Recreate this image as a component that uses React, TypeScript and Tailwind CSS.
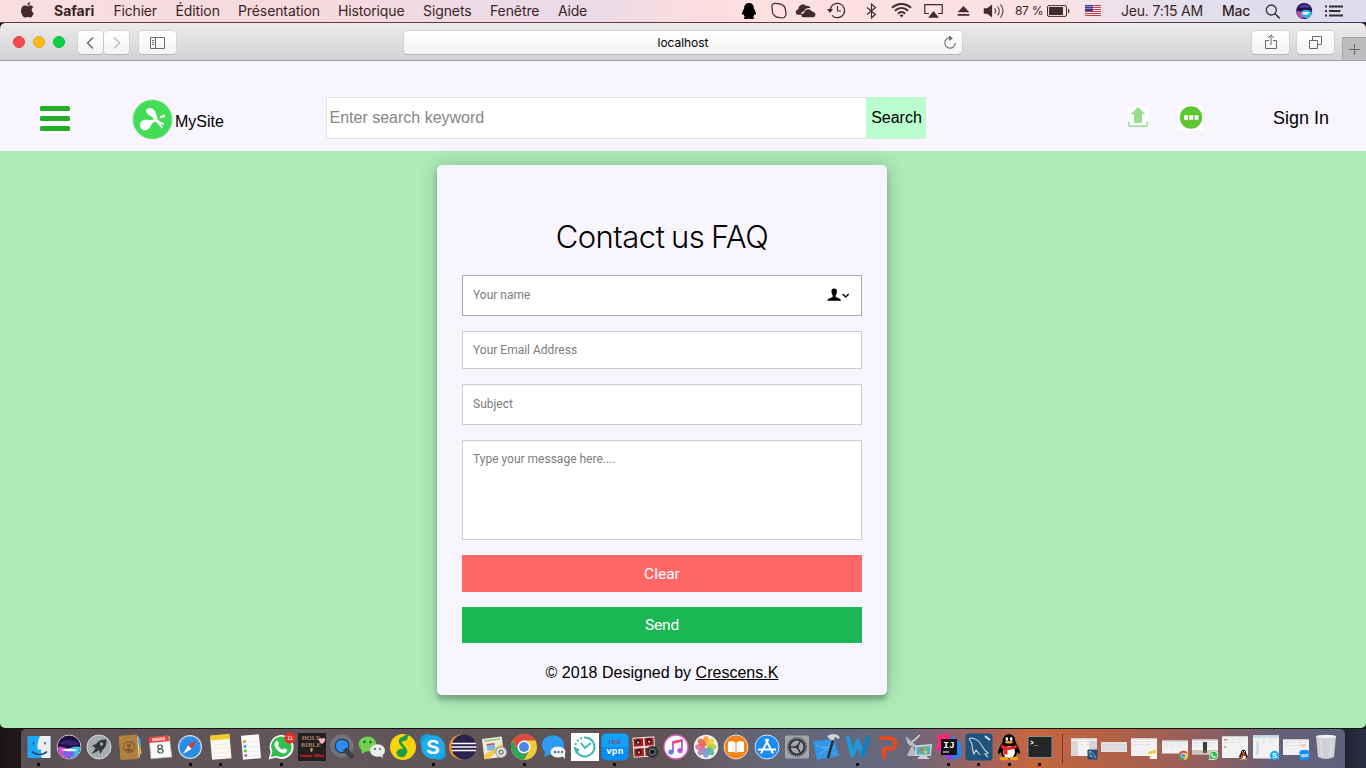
import React from "react";

type Kids = { children: React.ReactNode };

/* ---------- menu bar ---------- */

function MenuIcon({ w, slot, children }: Kids & { w: number; slot: string }) {
  return (
    <div className={`h-[22px] shrink-0 ${slot}`}>
      <svg width={w} height={22} viewBox={`0 0 ${w} 22`} fill="#432a2d" className="block overflow-visible">
        {children}
      </svg>
    </div>
  );
}

const label = "shrink-0 whitespace-nowrap";

function MenuBar() {
  return (
    <div className="flex h-[22px] shrink-0 items-center bg-[linear-gradient(90deg,#f7dfdf_0px,#f5d9de_330px,#eddbe6_490px,#ebdbe6_600px,#fbdde1_690px,#ffe0e0_760px,#fde2e3_1040px,#efe1e9_1110px,#e2dfed_1200px,#dcdcec_1366px)] pl-5 font-['Inter','Liberation_Sans',sans-serif] text-[14px] leading-[22px] tracking-[-0.2px] text-[#3a2427]">
      <MenuIcon w={15} slot="w-[34px]">
        <path d="M10.2 2.2c.1 1.700-1.300 3.200-2.900 3.200-.2-1.600 1.300-3.100 2.900-3.200zM7.400 6.300c.8 0 1.700-.8 3.200-.8 1.200 0 2.200.6 2.800 1.500-2.500 1.500-2.100 4.900.4 5.900-.7 1.900-2 4.600-3.500 4.600-1 0-1.400-.6-2.700-.6s-1.700.6-2.600.6C3.300 17.500 1 14.300 1 10.700c0-3.300 1.900-5.100 3.900-5.100 1.100 0 1.900.7 2.500.7z" />
      </MenuIcon>
      <span className={`${label} w-[59.500px] font-bold tracking-[0px]`}>Safari</span>
      <span className={`${label} w-[62px]`}>Fichier</span>
      <span className={`${label} w-[62.500px] tracking-[-0.100px]`}>Édition</span>
      <span className={`${label} w-[100px] tracking-[-0.100px]`}>Présentation</span>
      <span className={`${label} w-[85px] tracking-[-0.150px]`}>Historique</span>
      <span className={`${label} w-[67px] tracking-[-0.100px]`}>Signets</span>
      <span className={`${label} w-[68px] tracking-[-0.100px]`}>Fenêtre</span>
      <span className={`${label} w-[184px]`}>Aide</span>
      <MenuIcon w={14} slot="w-[29px]">
        <path fill="#000" d="M7 3c3.200 0 4.800 2.200 4.800 5.200 1.300 2.300 2.500 4.800 2.100 6.300-.5.700-1.100 0-1.600-.4 0 1.100-.5 1.900-1.200 2.600 1.300.4 1.400 1.900 0 2.200-1.300.2-2.800.1-4.100-.5-1.300.6-2.800.7-4.100.5-1.400-.3-1.300-1.800 0-2.200-.7-.7-1.200-1.500-1.200-2.600-.5.400-1.100 1.100-1.600.4-.4-1.500.8-4 2.100-6.300C2.200 5.200 3.800 3 7 3z" />
      </MenuIcon>
      <MenuIcon w={17} slot="w-[24px]">
        <path fill="none" stroke="#432a2d" strokeWidth="1.200" d="M.8 7C.3 4.300 3 2.900 5.700 3.700c5-.8 9.100 2.500 8.900 7.300 1.300 3.500-.2 7-3.300 7-1 0-1.600-.4-2.500-.4C4.200 17.600 1 14.500 1.300 10 1.300 9 .9 8 .8 7z" />
      </MenuIcon>
      <MenuIcon w={21} slot="w-[32px]">
        <path d="M3 14.700c-3-.3-3.200-4.700.4-5.500C3.400 5.500 8.300 2.800 11 6c1.800-.6 3.800.1 4.300 2.200-3.400-.8-5.700.8-6.200 3.300-2.400.1-3.300 1.700-2.700 3.200zM8 17.200c-2.300-.1-2.400-4 1.300-4.100.2-4 5.700-5.200 7.500-1.600 4.500.2 4.800 5.400 1.200 5.700z" />
      </MenuIcon>
      <MenuIcon w={19} slot="w-[39px]">
        <path fill="none" stroke="#432a2d" strokeWidth="1.200" d="M3.200 10A7.200 7.200 0 1 1 5 15.300M10.500 6v5h3.500" />
        <path d="M0 9h6.200L3 13z" />
      </MenuIcon>
      <MenuIcon w={12} slot="w-[25px]">
        <path fill="none" stroke="#432a2d" strokeWidth="1.200" d="m1 7.500 8.500 7L5.500 18V4l4 3.500-8.500 7" />
      </MenuIcon>
      <MenuIcon w={21} slot="w-[33px]">
        <g fill="none" stroke="#432a2d" strokeWidth="2">
          <path d="M1 7.800c5.500-5.100 13.500-5.100 19 0M3.900 10.800c4-3.700 9.200-3.700 13.200 0M6.900 13.700c2.200-2 5-2 7.200 0" />
        </g>
        <path d="m10.500 17.500-2-2.300c1.300-1 2.700-1 4 0z" />
      </MenuIcon>
      <MenuIcon w={19} slot="w-[33px]">
        <path fill="none" stroke="#432a2d" strokeWidth="1.200" d="M5 13.500H.8V4.600h17.400v8.900H14" />
        <path d="m9.500 11 5.500 6.800H4z" />
      </MenuIcon>
      <MenuIcon w={13} slot="w-[26px]">
        <path d="m6.500 6 5.800 6.200H.7zM.7 14h11.600v1.800H.7z" />
      </MenuIcon>
      <MenuIcon w={22} slot="w-[32px]">
        <path d="M.8 8.200h3.400L9.100 4.500v13l-4.900-3.700H.8z" />
        <path fill="none" stroke="#432a2d" strokeWidth="1.200" d="M11.700 8.400c1.200 1.700 1.200 3.500 0 5.200M14.500 6.500c2.300 2.900 2.300 6.100 0 9M17.500 4.400c3.200 4.200 3.200 9 0 13.200" opacity=".8" />
      </MenuIcon>
      <span className={`${label} w-[31px] text-[12px] tracking-[-0.300px]`}>87 %</span>
      <MenuIcon w={24} slot="w-[38.500px]">
        <rect x="1.500" y="5.600" width="19" height="10.800" rx="1.500" fill="none" stroke="#432a2d" />
        <rect x="3" y="7" width="14" height="8" />
        <path d="M22 9h1.200v4H22z" />
      </MenuIcon>
      <MenuIcon w={16} slot="w-[36.500px]">
        <path fill="#f9e9ea" d="M0 5h16v11H0z" />
        <path stroke="#c53b49" d="M0 5.500h16M0 7.500h16M0 9.500h16M0 11.500h16M0 13.500h16M0 15.500h16" />
        <path fill="#3b3b85" d="M0 5h8v6H0z" />
        <path stroke="#d7d7ee" strokeDasharray="1 1" d="M.5 6.500H8M.5 8.500H8" />
      </MenuIcon>
      <span className={`${label} w-[101px]`}>Jeu. 7:15 AM</span>
      <span className={`${label} w-[43px] font-medium`}>Mac</span>
      <MenuIcon w={16} slot="w-[31px]">
        <circle cx="6.300" cy="10" r="5" fill="none" stroke="#38303a" strokeWidth="1.300" />
        <path stroke="#38303a" strokeWidth="1.600" d="m10 13.700 4.700 4.700" />
      </MenuIcon>
      <MenuIcon w={17} slot="w-[29px]">
        <circle cx="8.200" cy="11" r="8" fill="#1d1346" />
        <path fill="#5f35a8" d="M2.500 7c3-3.500 9-3.500 12 0-2 1.500-4 .5-6 .5S4 8.500 2.500 7z" />
        <path fill="#2fb9df" d="M4 13c3-4 7-4 12-1 0 2-2 5-4.500 6-3.500.5-6-1-7.500-5z" />
        <path fill="#d945b9" d="M1 11c3-1 5 3 6.500 7.500C3.500 18 1 15 1 11z" />
        <path fill="#fff" d="M6 13.200c2-1.800 5-1.600 7.500-.2C11 15.200 8 15.200 6 13.200z" />
      </MenuIcon>
      <MenuIcon w={19} slot="w-[19px]">
        <path fill="none" stroke="#33303a" strokeWidth="1.800" d="M0 6.500h2M0 11h2M0 15.500h2M4 6.500h14M4 11h11.500M4 15.500h14" />
      </MenuIcon>
    </div>
  );
}

/* ---------- browser toolbar ---------- */

const chip = "flex h-[23px] items-center justify-center rounded-[4px] bg-gradient-to-b from-white to-[#f4f4f4] shadow-[0_0_0_0.500px_#c4c2c4,0_1px_0.500px_#a9a7a9]";

function Toolbar() {
  return (
    <div className="flex h-[38px] shrink-0 items-start rounded-t-[5px] border-b border-[#a19fa2] bg-gradient-to-b from-[#edebed] to-[#d3d1d4] pt-2">
      <div className="mt-[5px] ml-[13px] flex gap-2">
        <i className="size-3 rounded-full border border-[#e0383d] bg-[#fc4a4d]" />
        <i className="size-3 rounded-full border border-[#e0a32b] bg-[#fdbd10]" />
        <i className="size-3 rounded-full border border-[#0fb43a] bg-[#07d345]" />
      </div>
      <div className="ml-[13px] flex gap-px">
        <div className={`${chip} w-[25px]`}>
          <svg width="9" height="14" viewBox="0 0 9 14" fill="none" stroke="#69676a" strokeWidth="1.400" className="-ml-px"><path d="M7 1.500 1.500 7 7 12.500" /></svg>
        </div>
        <div className={`${chip} w-[25px]`}>
          <svg width="9" height="14" viewBox="0 0 9 14" fill="none" stroke="#bcbabd" strokeWidth="1.400"><path d="M2 1.500 7.500 7 2 12.500" /></svg>
        </div>
      </div>
      <div className={`${chip} ml-[10px] w-[37px]`}>
        <svg width="15" height="12" viewBox="0 0 15 12" fill="none" stroke="#6b696c"><path d="M.5.500h14v11H.5zM5.500.500v11M2 3.500h2M2 5.500h2M2 7.500h2" /></svg>
      </div>
      <div className={`${chip} relative ml-[228px] w-[558px] pt-px font-['Inter','Liberation_Sans',sans-serif] text-[12px] tracking-[-0.050px] text-black`}>
        localhost
        <svg className="absolute top-[4px] right-[5px]" width="14" height="15" viewBox="0 0 14 15" fill="none" stroke="#777" strokeWidth="1.200"><path d="M7.500 2.800A5.200 5.200 0 1 0 12.200 8" /><path fill="#666" stroke="none" d="M6 .5 10 3.200 6 6z" /></svg>
      </div>
      <div className={`${chip} ml-[290px] w-[37px]`}>
        <svg width="12" height="16" viewBox="0 0 12 16" fill="none" stroke="#69676a" className="-mt-px"><path d="M4 6.500H.5v8h11v-8H8M6 11V1M3 4l3-3 3 3" /></svg>
      </div>
      <div className={`${chip} ml-2 w-[37px]`}>
        <svg width="13" height="13" viewBox="0 0 13 13" fill="none" stroke="#69676a"><path d="M.5 4.500h8v8h-8zM3.500 4V.500h9v8H9" /></svg>
      </div>
      <div className="mt-[6px] ml-2 flex h-[23px] flex-1 items-center justify-center border-t border-l border-[#a9a7aa] bg-[#bebcbf]">
        <svg width="11" height="11" viewBox="0 0 11 11" stroke="#69676a"><path d="M5.500 0v11M0 5.500h11" /></svg>
      </div>
    </div>
  );
}

/* ---------- site ---------- */

function SiteHeader() {
  return (
    <header className="flex h-[90px] shrink-0 items-start bg-[#f8f5ff] pl-10 text-[16px] text-black">
      <div className="mt-[45px] flex h-7 w-[30px] flex-col gap-[5px] bg-white">
        <i className="h-[5px] rounded-[1.500px] bg-[#22af27]" />
        <i className="h-[5px] rounded-[1.500px] bg-[#22af27]" />
        <i className="h-[5px] rounded-[1.500px] bg-[#22af27]" />
      </div>
      <svg className="mt-[38px] ml-[62px] shrink-0" width="41" height="42" viewBox="0 0 41 42">
        <circle cx="20.500" cy="20.500" r="19.500" fill="#43dc57" stroke="#83e391" strokeWidth="1" />
        <g fill="#fff">
          <path d="M14.200 12.500c-.6-2.500 2.300-4.500 5.300-3.200 3.500 1.600 5.600 5.800 6 11.200l.3 2.500-3-1.500c-1.500-4.800-7.500-4.500-8.600-9z" />
          <path d="M8 25.500c.2-4 4-5.300 7.500-4.700 3.500.5 4.500-.2 7-.3l2 2c-3.500.5-4.500 2-6 4.700-1.500 2.800-3.500 4.300-6.500 4C9 30.800 7.900 28.500 8 25.500z" />
          <path d="M23 20.800c2-.6 3.300.2 4.500 1.200 1.500 1.200 2.800 1.800 4 2 1 .3.800 1.800-.3 1.800-.9 0-1.600-.2-2.200-.5.2 1.200 1.300 2 2 2.700.4.800-.6 1.400-1.300 1-2.300-1.300-3.300-5.200-6.700-6.200z" />
          <path d="M27.700 19.800c-.3-2.300.9-3.500 2.600-3.300.6-1.300 2.600-1.200 2.900.2.200 1.500-1.200 2.200-2.500 1.800-.9-.2-1.900.2-3 1.300z" />
        </g>
      </svg>
      <span className="mt-[49px] ml-[2px] w-[151px] leading-6">MySite</span>
      <input placeholder="Enter search keyword" className="mt-9 h-[42px] w-[540px] border border-r-0 border-[#e4e4e4] bg-white pl-[2.500px] outline-none placeholder:text-[#858585]" />
      <button className="mt-9 h-[42px] w-[60px] border-y border-r border-[#c6f5d3] bg-[#b9ffcf] pl-[2px]">Search</button>
      <svg className="mt-[46px] ml-[202px] shrink-0" width="20" height="20">
        <path fill="#fff" d="M0 0h20v20H0z" />
        <path fill="#98df8d" d="m10 0 7.500 7.300H14V15q0 1-1 1H7q-1 0-1-1V7.300H2.500z" />
        <path fill="none" stroke="#98df8d" strokeWidth="1.500" d="M.8 14.500V18q0 1.200 1.200 1.200h16q1.200 0 1.200-1.200v-3.500" />
      </svg>
      <svg className="mt-11 ml-[30px] shrink-0" width="25" height="25">
        <path fill="#fff" d="M0 0h25v25H0z" />
        <circle cx="13" cy="12.500" r="11.200" fill="#5dc732" />
        <path fill="#fff" d="M6 10.300h4v4.400H6zM11.200 10.300h4v4.400h-4zM16.500 10.300h4v4.400h-4z" />
      </svg>
      <span className="mt-[45px] ml-[70px] text-[18px] leading-6">Sign In</span>
    </header>
  );
}

const field = "block w-full shrink-0 border bg-white px-[10px] font-['Roboto',sans-serif] text-[12px] outline-none placeholder:text-[#7d7d7d]";
const action = "flex w-full shrink-0 items-center justify-center font-['Roboto',sans-serif] text-[15.500px] text-white";

function ContactCard() {
  return (
    <div className="ml-[437px] flex h-[530px] w-[450px] flex-col gap-[15px] rounded-[5px] bg-[#f8f5ff] px-[25px] shadow-[0_0_20px_rgba(0,0,0,0.200),0_5px_5px_rgba(0,0,0,0.240)]">
      <h1 className="mt-[51px] mb-px flex h-[43px] shrink-0 items-center justify-center whitespace-nowrap font-['Inter','Liberation_Sans',sans-serif] text-[31px] font-light tracking-[-0.500px] text-black [word-spacing:-1.600px]">
        Contact us FAQ
      </h1>
      <div className="relative h-[41px] shrink-0">
        <input placeholder="Your name" className={`${field} h-[41px] border-[#a9a9a9] pb-[2px]`} />
        <svg className="absolute top-[13px] right-3" width="23" height="14" viewBox="0 0 23 14">
          <path d="M4.500 3c0-1.800 1-2.500 2.700-2.500S9.900 1.200 9.900 3c.2 2.300-.8 3.500-1.200 4.500v1.300c1 1.200 4.900 1.300 5.200 3.500v.5H.5v-.5c.3-2.200 4.200-2.300 5.200-3.500V7.500C5.300 6.500 4.300 5.300 4.500 3z" />
          <path d="m15.700 6 3 3 3-3" fill="none" stroke="#000" strokeWidth="1.500" />
        </svg>
      </div>
      <input placeholder="Your Email Address" className={`${field} h-[38px] border-[#cccccc]`} />
      <input placeholder="Subject" className={`${field} h-[41px] border-[#cccccc] pb-[2px]`} />
      <textarea placeholder="Type your message here...." className={`${field} h-[100px] resize-none border-[#cccccc] pt-[9px] leading-[18px]`} />
      <button className={`${action} h-[37px] bg-[#ff6767] pt-[2.500px]`}>Clear</button>
      <button className={`${action} h-[36px] bg-[#1bb755] pt-[1.500px] tracking-[-0.200px]`}>Send</button>
      <p className="-mt-[1px] shrink-0 text-center text-[16px] leading-[31px] tracking-[0.020px] text-black">
        © 2018 Designed by <a className="underline">Crescens.K</a>
      </p>
    </div>
  );
}

/* ---------- dock ---------- */

const petals = ["#f6a13b", "#f5cf3e", "#b5cf4a", "#5fb98a", "#6e9fd6", "#a682c5", "#e0709a", "#ee6250"];

function WindowThumb({ h, children }: { h: number; children?: React.ReactNode }) {
  const t = -h / 2;
  return (
    <g>
      <rect x="-13" y={t} width="26" height={h} fill="#f3f1f1" />
      <path stroke="#cfccd0" strokeWidth="1.200" d={`M-13 ${t + 0.6}H13`} />
      <path stroke="#dfdddf" strokeWidth="1" strokeDasharray="5 2 3 3" d={`M-11 ${t + 3.5}H11M-11 ${t + 6.5}H8`} />
      {children}
    </g>
  );
}

function ChromeMark({ r }: { r: number }) {
  return (
    <g transform={`scale(${r / 13})`}>
      <circle r="13" fill="#f6ca34" />
      <path fill="#de4b3d" d="M-11.300-6.500A13 13 0 0 1 11.300-6.500H0L-5.600 3.200z" />
      <path fill="#37a257" d="M-11.300-6.500-5.600 3.200 5.600 3.200 0 13A13 13 0 0 1-11.300-6.500z" />
      <circle r="6.500" fill="#fff" />
      <circle r="5" fill="#4c86e8" />
    </g>
  );
}

function Penguin() {
  return (
    <g>
      <path d="M-6.500-5C-6.500-15.500 6.500-15.500 6.500-5 9-1 12 5 10.500 7 9 7 8.500 5 8 5 8 9 5 12 0 12S-8 9-8 5c-.5 0-1 2-2.500 2C-12 5-9-1-6.500-5z" />
      <ellipse cy="5" rx="6" ry="6" fill="#fff" />
      <ellipse cx="-5" cy="11.500" rx="4.500" ry="1.800" fill="#f5a21c" />
      <ellipse cx="5" cy="11.500" rx="4.500" ry="1.800" fill="#f5a21c" />
      <ellipse cx="-2.200" cy="-8" rx="1.300" ry="2" fill="#fff" />
      <ellipse cx="2.200" cy="-8" rx="1.300" ry="2" fill="#fff" />
      <ellipse cy="-4.700" rx="4" ry="1.300" fill="#f5a21c" />
      <path fill="#e5272a" d="M-7.500-2.500Q0 2 7.500-2.500L8 .5Q2 3.500-1.500 3V7.500h-4V2L-8 .5z" />
    </g>
  );
}

function WhatsMark() {
  return (
    <g>
      <path fill="#fff" d="M-12.500 12.500-10.300 5A12 12 0 1 1-5 10.600z" />
      <path fill="#2fbf4a" d="m-10.300 10.300 1.700-5.700A10.200 10.200 0 1 1-4.500 8.700z" />
      <path fill="#fff" d="M-5-5.500c1.500-1 2.500 0 3 2.500l-1 1.500c1 2 2.500 3.300 4.500 4.300L3 1.300c2 .4 3.700 1.500 3 2.700C5 6.500 2.500 7 0 5.700-3.500 4-6.500.500-6.500-2.500c0-1.200.6-2.300 1.500-3z" />
    </g>
  );
}

const dolphin = "M-10-8C-7-10-2-8 1-4 4 0 5 4 9 6L6 7 9 10M-10-8-7-3C-7 2-6 5-5 7L-3 3 1 8";

type Item = { open?: boolean; art: React.ReactNode };

const apps: Item[] = [
  { open: true, art: <><path fill="#1fa6f2" d="M-11.500-11h23v22h-23z" /><path fill="#e9eff5" d="M1-11h10.500v22H3C1.500 8 2 5 2 2.500H-1.500C-2-3-1-7 1-11z" /><path fill="none" stroke="#153c60" strokeWidth="1.200" d="M-7 4.500C-3 8.500 4 8.500 8 4.500M-5.500-5v2.500M6-5v2.500" /></> },
  { art: <><circle r="12" fill="#1d1140" stroke="#c9c5d1" /><path fill="#3c2278" d="M-11-3Q0-11 11-3 5-1 0-2t-11-1z" /><path fill="#d24dca" d="M-11.300 0Q-5-1 0 3T-3 11.500Q-11 8-11.300 0z" /><path fill="#36c3e4" d="M11.300 0Q4-2-1 3T1 11.500Q11 10 11.300 0z" /><path fill="#7e63e5" d="M-6 5Q0 1 6 6 4 11 0 11.500-4 11-6 5z" /><path fill="#fff" d="M-8 3Q0 0 9 3 1 5.500-8 3z" /></> },
  { art: <><circle r="12" fill="#a5acb1" stroke="#d4d7d9" /><path fill="#34383d" d="M7.500-7.500C2-8-1-6-3-3L-7-1.500-5 0-3.500 1.500-7.500 7-2 4.500 0 3l1.500 4L3.500 3C6 1 8-3 7.500-7.500z" /><circle cx="2.500" cy="-3" r="1.700" fill="#a5acb1" /></> },
  { art: <g transform="rotate(-4)"><path fill="#eee" d="M6-10h3v21H6z" /><path fill="#3ca7df" d="M9-8h2v6H9z" /><path fill="#69b84a" d="M9-2h2v5H9z" /><path fill="#eeb127" d="M9 3h2v5H9z" /><rect x="-10.500" y="-12" width="18.500" height="24.500" rx="1.500" fill="#b1803f" /><circle cx="-1" r="5.500" fill="none" stroke="#80592b" /><circle cx="-1" cy="-1.500" r="2" fill="#80592b" /><path fill="#80592b" d="M-5 3Q-1-1 3 3L-1 5z" /></g> },
  { art: <g transform="rotate(-5)"><path fill="#fafafa" stroke="#b2b4b7" strokeWidth=".7" d="M-10-10h20l1 21h-21z" /><path fill="#e44542" d="M-10.500-11h20v6h-20z" /><text x="-.5" y="-6.300" textAnchor="middle" fontSize="4.500" fontWeight="bold" fill="#fff">MARS</text><text y="6.500" textAnchor="middle" fontSize="13" fill="#333">8</text></g> },
  { open: true, art: <><circle r="12" fill="#dce2e7" /><circle r="10.800" fill="#278ce6" /><path fill="#fff" d="M-7 7-1.800-1.800 1.800 1.800z" /><path fill="#e9362f" d="M7-7-1.800-1.800 1.800 1.800z" /><circle r="10" fill="none" stroke="#8fc7f4" strokeWidth=".5" strokeDasharray="1 2" /></> },
  { open: true, art: <g transform="rotate(-5)"><path fill="#fbf9ef" d="M-10-11h19.500v23H-10z" /><path fill="#f6c928" d="M-10-12.500h19.500v5H-10z" /><path stroke="#e2dfd3" strokeWidth=".5" d="M-9-2.500H9M-9 1.500H9M-9 5.500H9M-9 9.500H9" /></g> },
  { art: <g transform="rotate(-5)"><path fill="#fafafa" d="M-9-12H9v24H-9z" /><circle cx="-6" cy="-6" r="1.500" fill="#f28c2c" /><circle cx="-6" cy="-1" r="1.500" fill="#2c9fe9" /><circle cx="-6" cy="3.500" r="1.500" fill="#59c140" /><circle cx="-6" cy="8" r="1.500" fill="#bf55d3" /><path stroke="#dcdcdc" strokeWidth=".7" d="M-3-5H7M-3-0H7M-3 4.500H7M-3 9H7" /></g> },
  { open: true, art: <><WhatsMark /><circle cx="9" cy="-9" r="5.500" fill="#ea2b2b" /><text x="9" y="-6.700" textAnchor="middle" fontSize="6" fill="#fff">11</text></> },
  { art: <><path fill="#231f20" d="M-14-14h28v28h-28z" /><g textAnchor="middle" fontFamily="Liberation Serif" fontWeight="bold"><text x="-1" y="-7.300" fontSize="6.500" fill="#a98466">HOLY</text><text x="-1" y="-.3" fontSize="6.500" fill="#a98466">BIBLE</text><text y="9.500" fontSize="4.800" fill="#e82027">Sainte Bible</text></g><path stroke="#c9a65a" strokeWidth="1.300" d="M-.5 1v4M-2 2.500h3" /><path fill="#f9b3c8" d="M10-3C4-7 8-11 10-8c2-3 6 1 0 5z" /></> },
  { art: <><circle r="9.500" cy="-1" fill="#1a2a43" stroke="#6f747c" strokeWidth="4.500" /><circle r="6.300" cy="-1" fill="#2b8df0" /><path stroke="#3d4047" strokeWidth="5" d="m2.500 2 8.500 8.500" /></> },
  { art: <><ellipse cx="-4.500" cy="-3" rx="8.800" ry="7.500" fill="#6fd150" /><path fill="#6fd150" d="M-11 1-10 7-4 3z" /><circle cx="-7.500" cy="-5" r="1.200" fill="#29521f" /><circle cx="-1.500" cy="-5" r="1.200" fill="#29521f" /><ellipse cx="5.500" cy="3.500" rx="7.500" ry="6.200" fill="#eceeec" /><path fill="#eceeec" d="m6 8 5 3-1-5z" /><circle cx="3" cy="2" r="1" fill="#555" /><circle cx="8" cy="2" r="1" fill="#555" /></> },
  { art: <><circle r="13" fill="#fbd20a" /><ellipse cx="-1.500" cy="6" rx="5" ry="4.200" fill="#1d9e46" /><path fill="none" stroke="#1d9e46" strokeWidth="2.600" d="M3.200 6C3.200 0-3.500-2-3-6.500-2.500-10 2-8 4.500-12.500" /><path fill="#1d9e46" d="M-3-7Q0-9.500 4.500-13q1 3-.5 6Q0-5.500-2-5z" /></> },
  { open: true, art: <><circle cx="-6" cy="-6" r="7" fill="#129fdc" /><circle cx="6" cy="6" r="7" fill="#129fdc" /><circle r="11.800" fill="#1cace9" /><text y="7" textAnchor="middle" fontSize="20" fontWeight="bold" fill="#fff">S</text></> },
  { art: <><circle cx="-1.500" r="12.500" fill="#f0932a" /><circle cx="1" r="12.500" fill="#2b2250" /><path stroke="#fff" strokeWidth="1.500" d="M-11-3.500h24M-11.500 0h25M-11 3.500h24" /></> },
  { art: <g transform="rotate(-7)"><path fill="#ece9de" d="M-11-9.500h20v20.500h-20z" /><path fill="#f3ca43" d="m-11 7 20-10v4L-7 11h-4z" /><path fill="#79b8e6" d="M-7-3h8v6h-8z" /><path fill="#dc4240" d="M-7-4h8v1.500h-8z" /><path fill="#96c46b" d="M-9-8H7v1.500H-9z" /><circle cx="6.500" cy="6" r="5.300" fill="#dfe2e6" stroke="#9ba1a7" /><circle cx="6.500" cy="6" r="2" fill="none" stroke="#59616b" /></g> },
  { open: true, art: <ChromeMark r={13} /> },
  { art: <><ellipse cx="-1" cy="-2" rx="11" ry="9.800" fill="#2d9cf0" /><path fill="#2d9cf0" d="m-8 2-2 8 7-3z" /><ellipse cx="4" cy="5" rx="7.500" ry="5.500" fill="#eff4f8" /><path fill="#eff4f8" d="m7 8 4 4V5z" /><circle cx="1" cy="5" r="1.100" fill="#234a86" /><circle cx="4.500" cy="5" r="1.100" fill="#234a86" /><circle cx="8" cy="5" r="1.100" fill="#234a86" /></> },
  { art: <><path fill="#fff" d="M-14-14h28v28h-28z" /><path fill="none" stroke="#35b4b0" strokeWidth="2" d="M-1-9.500A9.500 9.500 0 1 1-9 3" /><path fill="none" stroke="#35b4b0" strokeWidth="2" strokeDasharray="2 2" d="M-9.500 2A9.500 9.500 0 0 1-3-9" /><path fill="none" stroke="#35b4b0" strokeWidth="1.800" d="M-4-4 0 1l6-5" /><path fill="#35b4b0" d="m-11 1 6 1-4 5z" /></> },
  { open: true, art: <><rect x="-13.500" y="-13.500" width="27" height="27" rx="5" fill="#0a8df3" /><path fill="#12b3fb" d="M-13.500 0v-8.500a5 5 0 0 1 5-5h17a5 5 0 0 1 5 5V0z" opacity=".6" /><text y="-2.700" textAnchor="middle" fontSize="8" letterSpacing=".3" fill="#ae2a55">red</text><text y="7" textAnchor="middle" fontSize="9" letterSpacing=".4" fontWeight="bold" fill="#fff">vpn</text></> },
  { art: <g transform="rotate(-4)"><path fill="#e6e0de" d="M-12-10h22v20h-22z" /><path fill="#a81f22" d="M-11-9h9.500v8H-11zM0-9h9v8H0zM-11 1h9.500v8H-11zM0 1h9v8H0z" /><g fill="#2b1413"><circle cx="-6.500" cy="-5.500" r="2.600" /><circle cx="4.500" cy="-5.500" r="2.600" /><circle cx="-6.500" cy="4.500" r="2.600" /></g><g fill="#e3a58b"><circle cx="-6.500" cy="-5" r="1.200" /><circle cx="4.500" cy="-5" r="1.200" /><circle cx="-6.500" cy="5" r="1.200" /></g><circle cx="7" cy="5.500" r="6" fill="#34363a" /><circle cx="7" cy="5.500" r="2.800" fill="#111" stroke="#787c84" /></g> },
  { art: <><circle r="12" fill="#fafafa" stroke="#d95cc3" strokeWidth="1.300" /><path fill="none" stroke="#bd4dd3" strokeWidth="1.700" d="M-3 5V-5L6-7V3" /><path stroke="#ed4770" strokeWidth="2.500" d="m-3-4.500 9-2" /><circle cx="-5" cy="5" r="2.600" fill="#5d83ec" /><circle cx="4" cy="3.500" r="2.600" fill="#b54ed8" /></> },
  { art: <><circle r="12.200" fill="#f5f4f2" />{petals.map((c, i) => <ellipse key={c} cy="-6" rx="3.200" ry="4.900" fill={c} opacity=".9" transform={`rotate(${i * 45})`} />)}</> },
  { art: <><circle r="12" fill="#f3851d" stroke="#efd9c3" /><path fill="#fff" d="M-8-5Q-3-7 0-4 3-7 8-5V5Q3 4 0 6-3 4-8 5z" /><path stroke="#f3851d" d="M0-4V6" /></> },
  { art: <><circle r="12" fill="#1a8cf3" stroke="#d3e4f4" /><path fill="none" stroke="#fff" strokeWidth="1.900" d="M1.500-8-6 6.500M-1.500-8 6 6.500M-9 2.500H9" /></> },
  { art: <><rect x="-12" y="-11.500" width="24" height="23" rx="1.500" fill="#a2a5a9" /><circle r="9.200" fill="none" stroke="#4d4f52" strokeWidth="1.500" strokeDasharray="1.200 .7" /><circle r="7.500" fill="#a5a7aa" stroke="#35373a" strokeWidth="2.200" /><circle r="1.800" fill="#35373a" /><path stroke="#35373a" strokeWidth="1.500" d="M0 0h-7M0 0l3.500-6M0 0l3.500 6" /></> },
  { art: <g><path fill="#3395e7" d="m-14-6 21-2 5 17-22 4z" /><path stroke="#87c3f3" strokeWidth=".5" fill="none" d="m-11-2 20 9M6-6-8 9M-6 0 7 0" /><path stroke="#28292c" strokeWidth="2.400" d="M6.500-8.500 1 11" /><path fill="#d2d6da" d="m0-11 5-2 5 .5 3 3-2 1.500-2-2-1.500.5L7-6.500l-4-1z" /></g> },
  { open: true, art: <><path fill="none" stroke="#1f9ad9" strokeWidth="4.200" strokeLinejoin="round" strokeLinecap="round" d="M-10-9-5.500 8.500 0-6 4.500 8.500" /><path stroke="#147fc0" strokeWidth="4.200" strokeLinecap="round" d="M4.500 8.500 10-9" /></> },
  { art: <path fill="none" stroke="#e24a21" strokeWidth="4.200" strokeLinejoin="round" strokeLinecap="round" d="M-7-9H1C9.500-9 9.500 2 2 2H-4V10" /> },
  { art: <><path fill="#b8bcc0" stroke="#70767d" strokeWidth=".8" d="M-12-11C-13-3-7 2 0 0z" /><path stroke="#e2e4e7" strokeWidth="1.300" d="m-6-5 8-7M-6-5-1-9" /><path fill="#b8bcc0" d="m-7 0-4 9h10L-5 0z" /><path fill="#ccd1d5" d="M-3-1.500 14-3 13 9H-3z" /><path fill="#55b0c3" d="M-1.500 0 12-1V7.500H-1.500z" /><path fill="#ed6239" d="m2 1.500 3-1v3l-3 .5z" /><path fill="#76be3b" d="m6 .5 3-1v3L6 3z" /><path fill="#edc83a" d="M6 4h3v2.500H6z" /><path fill="#d0d3d6" d="M2 9h6l4 3H-1z" /></> },
  { open: true, art: <><path fill="#f82979" d="m-12-12 13-1 4 5-13 12-6-1 3-6z" /><path fill="#2387ee" d="M2-12 12-4 13 8 5 13-1 8z" /><path fill="#8b42ed" d="m-11 3 7-3 10 10-6 3z" /><path fill="#111" d="M-8-8H8V8H-8z" /><text x="0" y="1" textAnchor="middle" fontFamily="Liberation Mono" fontSize="9.500" fontWeight="bold" fill="#fff">IJ</text><path stroke="#fff" strokeWidth="1.200" d="M-6 5h6" /></> },
  { open: true, art: <><rect x="-13.500" y="-13.500" width="27" height="27" rx="3" fill="#1f537c" /><path fill="none" stroke="#bcd0dd" strokeWidth="1.200" d={dolphin} /><path stroke="#dce5ed" strokeWidth="2" d="m6-11 5 4" /></> },
  { open: true, art: <Penguin /> },
  { open: true, art: <><rect x="-12" y="-10.500" width="24" height="21" fill="#242628" stroke="#8d8d8d" /><text x="-10" y="-2.500" fontFamily="Liberation Mono" fontSize="6.500" fontWeight="bold" fill="#fff">&gt;_</text></> },
];

const windows: Item[] = [
  { art: <><WindowThumb h={18}><path fill="#d6d7db" d="M-13-6h7V9h-7zM5-6h8v9H5z" /></WindowThumb><g transform="translate(8.500 7.500)"><rect x="-5" y="-5" width="10" height="10" rx="1" fill="#204e78" /><path fill="none" stroke="#bdd" strokeWidth="2" transform="scale(.35)" d={dolphin} /></g></> },
  { art: <g><path fill="#e3dfe2" d="M-13-5h26V5h-26z" /><path stroke="#cfcbcf" strokeWidth=".8" strokeDasharray="3 1" d="M-12-2.500h24M-12 0h24M-12 2.500h24" /></g> },
  { art: <><WindowThumb h={18} /><path fill="#faf8e9" d="m5 5 8-1v8H6z" /><path fill="#efc929" d="m4 5 8-2v3L5 7z" /></> },
  { art: <><WindowThumb h={13} /><g transform="translate(8.500 8.500)"><ChromeMark r={4.800} /></g></> },
  { art: <><WindowThumb h={15}><path fill="#2c4633" d="M-2-5h4V6h-4z" /><path fill="#9b8168" d="M-13 3h26v4h-26z" opacity=".4" /></WindowThumb><g transform="translate(8.500 8.500) scale(.38)"><WhatsMark /></g></> },
  { art: <><WindowThumb h={22}><path fill="#e1777a" d="M-11-8h3v1.500h-3z" /><path fill="#a9b982" d="M-11-1h2v2h-2z" /></WindowThumb><g transform="translate(8.500 8) scale(.4)"><Penguin /></g></> },
  { art: <><WindowThumb h={23}><path fill="#b9dcef" d="M-13-12h26v3h-26zM-10-5h3v13h-3z" opacity=".7" /></WindowThumb><circle cx="8.500" cy="8.500" r="4.700" fill="#1cace9" /><text x="8.500" y="11.200" textAnchor="middle" fontSize="7.500" fontWeight="bold" fill="#fff">S</text></> },
  { art: <><WindowThumb h={16}><path fill="#e6d1cf" d="M5-3h5v3H5z" /></WindowThumb><rect x="3.500" y="3" width="10" height="10" rx="2.500" fill="#168cf5" /><text x="8.500" y="9.800" textAnchor="middle" fontSize="4.500" fontWeight="bold" fill="#fff">vpn</text></> },
  { art: <><path fill="#d4d6da" d="M-10-11h20L8 10Q0 14-8 10z" opacity=".95" /><ellipse cy="-10.500" rx="10" ry="1.800" fill="#eceef0" /><path stroke="#e8eaed" strokeWidth="1.500" opacity=".6" d="M-5.500-7-4 9M5.500-7 4 9" /></> },
];

function DockItem({ item }: { item: Item }) {
  return (
    <div className="flex h-[39px] w-[30.330px] shrink-0 flex-col items-center pt-[3px]">
      <svg width="30" height="30" viewBox="-15 -15 30 30" fontFamily="Liberation Sans" className="shrink-0 overflow-visible">
        {item.art}
      </svg>
      {item.open && <i className="mt-[1px] size-[3px] shrink-0 rounded-[1px] bg-black" />}
    </div>
  );
}

function Dock() {
  return (
    <div className="flex h-[39px] shrink-0 bg-[linear-gradient(90deg,#1a1315_0,#251a1d_30px,#211d26_1330px,#282f44_1366px)] pl-[21px]">
      <div className="flex h-[39px] w-[1324px] overflow-hidden rounded-t-[5px] bg-[linear-gradient(90deg,#5a5054_0,#62565a_250px,#5e5355_640px,#666371_720px,#62687d_810px,#6b667a_890px,#a76359_970px,#c5663f_1010px,#b06148_1100px,#8e5f62_1190px,#686177_1250px,#5e617b_1324px)] pl-[2.600px]">
        {apps.map((a, i) => <DockItem key={i} item={a} />)}
        <i className="mt-[5px] mr-[6px] ml-[6.800px] h-[29px] w-px shrink-0 bg-[#74362d]" />
        {windows.map((a, i) => <DockItem key={i} item={a} />)}
      </div>
    </div>
  );
}

export default function App() {
  return (
    <div className="flex h-[768px] w-[1366px] flex-col overflow-hidden bg-[#201619] font-['Liberation_Sans',sans-serif]">
      <MenuBar />
      <div className="h-px shrink-0 bg-[linear-gradient(90deg,#66343a_0,#66343a_1000px,#3b3b50_1366px)]" />
      <div className="flex h-[705px] shrink-0 flex-col overflow-hidden rounded-t-[5px] rounded-b-[5px]">
        <Toolbar />
        <SiteHeader />
        <main className="flex-1 bg-[#adebb7] pt-[14px]">
          <ContactCard />
        </main>
      </div>
      <div className="h-px shrink-0 bg-[#171416]" />
      <Dock />
    </div>
  );
}
